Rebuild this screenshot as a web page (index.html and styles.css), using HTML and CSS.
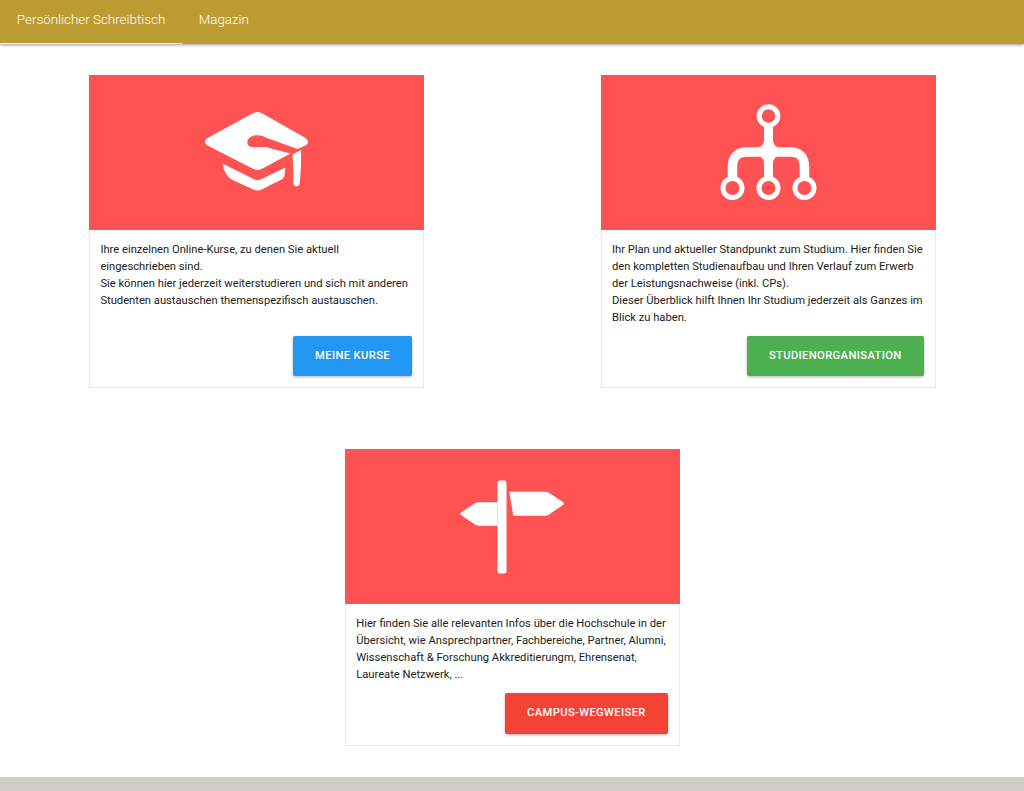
FILE: index.html
```html
<!DOCTYPE html>
<html lang="de">
<head>
<meta charset="utf-8">
<title>Persönlicher Schreibtisch</title>
<link rel="stylesheet" href="styles.css">
</head>
<body>
<nav class="nav">
  <a class="tab tab-active">Persönlicher Schreibtisch</a>
  <a class="tab">Magazin</a>
</nav>
<main class="grid">
  <section class="card">
    <div class="banner">
      <svg class="icon" viewBox="1.5 2.5 130 100" width="130" height="100">
        <path fill="#fff" d="M62 14 Q67 11 72 14 L115 38.500 Q120 42.500 115 46 L107 49.500 L75 38 C70 34.500 60 34.500 57 41 C56 46.500 60 48.500 65 47.500 L75 47.500 L100 54 L72 69 Q67 72 62 69 L17 46 Q12 42 17 38.500 Z"/>
        <path fill="#fff" d="M102 55 L110.500 50.500 Q111 70 109 85 Q106 89 103 85 Q103 70 102 55 Z"/>
        <path fill="#fff" d="M32 64 L64 80 Q67 81.500 70 80 L95 68 L94 75 Q94 79 89 81 L71 90 Q67 92 63 90 L43 81 Q34 77 32 64 Z"/>
      </svg>
    </div>
    <div class="body">
      <p class="text">Ihre einzelnen Online-Kurse, zu denen Sie aktuell eingeschrieben sind.<br>Sie können hier jederzeit weiterstudieren und sich mit anderen Studenten austauschen themenspezifisch austauschen.</p>
      <a class="btn btn-blue">Meine Kurse</a>
    </div>
  </section>
  <section class="card">
    <div class="banner">
      <svg class="icon" viewBox="1 0 125 115" width="125" height="115">
        <g fill="none" stroke="#fff" stroke-width="5">
          <circle cx="63.500" cy="21" r="9.300"/>
          <circle cx="27.500" cy="93" r="9.500"/>
          <circle cx="63.500" cy="93" r="9.500"/>
          <circle cx="99.500" cy="93" r="9.500"/>
          <path stroke-width="9.500" d="M27.500 82 V72 Q27.500 57 42 57 H85 Q99.500 57 99.500 72 V82"/>
          <path stroke-width="9" d="M63.500 31 V82"/>
        </g>
        <path fill="#fff" d="M53 52.500 Q58.500 51 59 46 H68 Q68.500 51 74 52.500 Z"/>
        <path fill="#fff" d="M54 61.500 Q58.500 62.500 59 67 H68 Q68.500 62.500 73 61.500 Z"/>
      </svg>
    </div>
    <div class="body">
      <p class="text">Ihr Plan und aktueller Standpunkt zum Studium. Hier finden Sie den kompletten Studienaufbau und Ihren Verlauf zum Erwerb der Leistungsnachweise (inkl. CPs).<br>Dieser Überblick hilft Ihnen Ihr Studium jederzeit als Ganzes im Blick zu haben.</p>
      <a class="btn btn-green">Studienorganisation</a>
    </div>
  </section>
  <section class="card card-center">
    <div class="banner">
      <svg class="icon" viewBox="0 -1 125 115" width="125" height="115">
        <rect x="47.500" y="10.500" width="9" height="93" rx="2.500" fill="#fff"/>
        <path fill="#fff" d="M47.500 32.300 H29 Q27 32.300 25 33.300 L11 42.500 Q9.500 43.700 11 45 L25 54.500 Q27 55.700 29 55.700 H47.500 Z"/>
        <path fill="#fff" d="M59.300 21.700 H95 Q97 21.700 99 22.700 L113 32 Q114.500 33.700 113 35 L99 44.500 Q97 45.700 95 45.700 H63.300 Z"/>
      </svg>
    </div>
    <div class="body">
      <p class="text">Hier finden Sie alle relevanten Infos über die Hochschule in der Übersicht, wie Ansprechpartner, Fachbereiche, Partner, Alumni, Wissenschaft &amp; Forschung Akkreditierungm, Ehrensenat, Laureate Netzwerk, ...</p>
      <a class="btn btn-red">Campus-Wegweiser</a>
    </div>
  </section>
</main>
<footer class="footer"></footer>
</body>
</html>
```
FILE: styles.css
```css
* { box-sizing: border-box; }
html, body { height: 100%; }
body {
  margin: 0;
  min-height: 791px;
  display: flex;
  flex-direction: column;
  overflow: hidden;
  background: #fff;
  font-family: Roboto, "Liberation Sans", sans-serif;
  color: #212121;
}
.nav {
  height: 44px;
  flex: none;
  display: flex;
  background: #bc9c30;
  box-shadow: 0 1px 3px rgba(0, 0, 0, .4);
}
.tab {
  display: block;
  height: 44px;
  padding: 11px 16.500px 0 16.800px;
  font-size: 13.400px;
  font-weight: 300;
  line-height: 17px;
  color: #fff;
}
.tab-active { border-bottom: 1px solid #fff; }
.grid {
  flex: 1;
  display: grid;
  grid-template-columns: 1fr 1fr;
  grid-auto-rows: min-content;
  row-gap: 61px;
  justify-items: center;
  padding: 30.700px 0 0 .8px;
}
.card {
  width: 334.800px;
  display: flex;
  flex-direction: column;
  border: 1px solid #e8e8e8;
  background: #fff;
}
.card-center { grid-column: 1 / 3; }
.banner {
  margin: -1px -1px 0;
  height: 155px;
  display: flex;
  align-items: center;
  justify-content: center;
  background: #ff5252;
}
.icon { display: block; }
.body {
  flex: 1;
  display: flex;
  flex-direction: column;
  padding: 11px 11px 11px 10.200px;
}
.text {
  margin: 0 0 10px;
  min-height: 68px;
  font-size: 11.200px;
  line-height: 17px;
}
.btn {
  display: block;
  align-self: flex-end;
  height: 40.500px;
  margin-top: auto;
  padding: 0 22px;
  border-radius: 2px;
  font-size: 11.200px;
  font-weight: 500;
  line-height: 40px;
  letter-spacing: .37px;
  text-transform: uppercase;
  color: #fff;
  box-shadow: 0 1px 3px rgba(0, 0, 0, .3);
}
.btn-blue { background: #2196f3; }
.btn-green { background: #4caf50; }
.btn-red { background: #f44336; }
.footer {
  flex: none;
  height: 14px;
  background: #cfcec9;
}
```
